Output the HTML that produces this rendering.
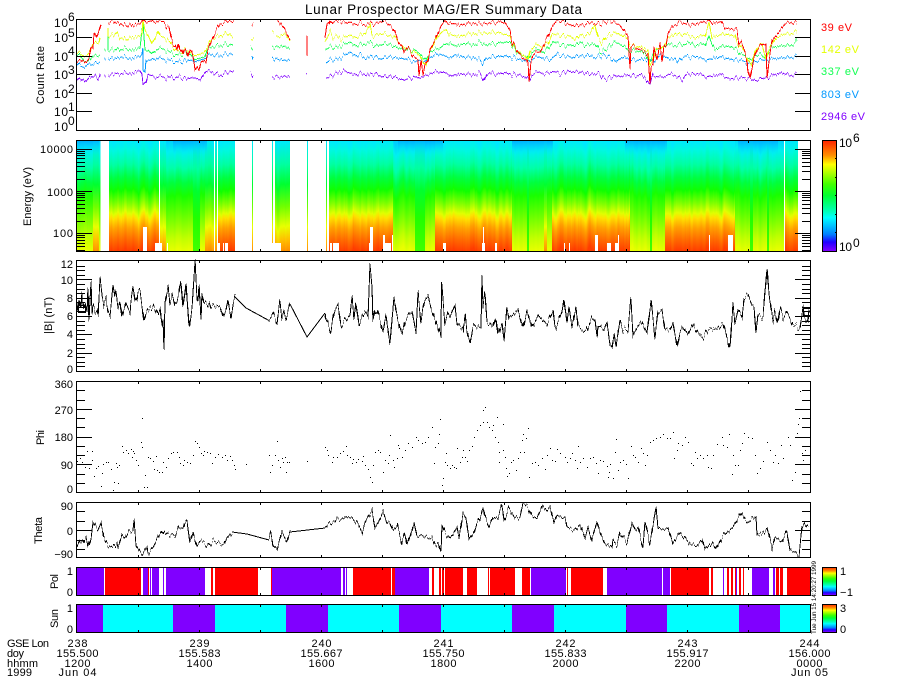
<!DOCTYPE html>
<html lang="en"><head><meta charset="utf-8"><title>Lunar Prospector MAG/ER Summary Data</title>
<style>
html,body{margin:0;padding:0;background:#fff;width:900px;height:700px;overflow:hidden}
svg{display:block}
text{font-family:"Liberation Sans",sans-serif;font-size:11px;fill:#000}
.c{shape-rendering:crispEdges;fill:none}
.k{stroke:#000;stroke-width:1}
.e{font-size:12px}
</style></head><body>
<svg width="900" height="700" viewBox="0 0 900 700" xmlns="http://www.w3.org/2000/svg">
<defs>
<linearGradient id="r" gradientUnits="userSpaceOnUse" x1="0" x2="0" y1="140" y2="251"><stop offset="0" stop-color="#00e8ff"/><stop offset=".09" stop-color="#00f8e0"/><stop offset=".22" stop-color="#00ffa0"/><stop offset=".34" stop-color="#00ff40"/><stop offset=".45" stop-color="#10ff00"/><stop offset=".57" stop-color="#80ff00"/><stop offset=".66" stop-color="#e0ff00"/><stop offset=".7" stop-color="#ffe000"/><stop offset=".79" stop-color="#ffa000"/><stop offset=".9" stop-color="#ff6800"/><stop offset="1" stop-color="#ff3c00"/></linearGradient>
<linearGradient id="w" gradientUnits="userSpaceOnUse" x1="0" x2="0" y1="140" y2="251"><stop offset="0" stop-color="#00d0ff"/><stop offset=".1" stop-color="#00f0f0"/><stop offset=".25" stop-color="#00ffa8"/><stop offset=".38" stop-color="#00ff40"/><stop offset=".5" stop-color="#18ff00"/><stop offset=".7" stop-color="#70ff00"/><stop offset=".88" stop-color="#c0ff00"/><stop offset="1" stop-color="#e8ff00"/></linearGradient>
<linearGradient id="g" gradientUnits="userSpaceOnUse" x1="0" x2="0" y1="140" y2="251"><stop offset="0" stop-color="#00e0ff"/><stop offset=".25" stop-color="#00ffa0"/><stop offset=".45" stop-color="#00ff30"/><stop offset=".7" stop-color="#20ff00"/><stop offset="1" stop-color="#40ff00"/></linearGradient>
<linearGradient id="o" gradientUnits="userSpaceOnUse" x1="0" x2="0" y1="140" y2="251"><stop offset="0" stop-color="#00e8ff"/><stop offset=".22" stop-color="#00ffa0"/><stop offset=".4" stop-color="#00ff30"/><stop offset=".6" stop-color="#70ff00"/><stop offset=".78" stop-color="#e8ff00"/><stop offset=".9" stop-color="#ffc000"/><stop offset="1" stop-color="#ff9000"/></linearGradient>
<linearGradient id="b" gradientUnits="userSpaceOnUse" x1="0" x2="0" y1="140" y2="155"><stop offset="0" stop-color="#00a0ff" stop-opacity=".75"/><stop offset=".5" stop-color="#00c8ff" stop-opacity=".45"/><stop offset="1" stop-color="#00e0ff" stop-opacity="0"/></linearGradient>
<linearGradient id="cb" x1="0" x2="0" y1="0" y2="1"><stop offset="0" stop-color="#ff2000"/><stop offset=".14" stop-color="#ff9000"/><stop offset=".22" stop-color="#ffff00"/><stop offset=".4" stop-color="#40ff00"/><stop offset=".5" stop-color="#00ff30"/><stop offset=".65" stop-color="#00ffc0"/><stop offset=".7" stop-color="#00ffff"/><stop offset=".85" stop-color="#0080ff"/><stop offset=".92" stop-color="#2000ff"/><stop offset="1" stop-color="#8000ff"/></linearGradient>
<filter id="streak" filterUnits="userSpaceOnUse" x="70" y="110" width="750" height="170" color-interpolation-filters="sRGB">
<feTurbulence type="fractalNoise" baseFrequency="0.17 0.0001" numOctaves="3" seed="4"/>
<feColorMatrix values="0 0 0 0 .5  1.6 0 0 0 -.3  0 0 0 0 0  0 0 0 0 1" result="n"/>
<feDisplacementMap in="SourceGraphic" in2="n" scale="11" xChannelSelector="R" yChannelSelector="G"/>
</filter>
<filter id="j1" filterUnits="userSpaceOnUse" x="70" y="10" width="750" height="125" color-interpolation-filters="sRGB">
<feTurbulence type="fractalNoise" baseFrequency="0.37 0.0001" numOctaves="2" seed="7"/>
<feColorMatrix values="0 0 0 0 .5  1.8 0 0 0 -.4  0 0 0 0 0  0 0 0 0 1" result="n"/>
<feDisplacementMap in="SourceGraphic" in2="n" scale="6" xChannelSelector="R" yChannelSelector="G"/>
</filter>
<filter id="j2" filterUnits="userSpaceOnUse" x="70" y="255" width="750" height="120" color-interpolation-filters="sRGB">
<feTurbulence type="fractalNoise" baseFrequency="0.41 0.0001" numOctaves="2" seed="11"/>
<feColorMatrix values="0 0 0 0 .5  1.8 0 0 0 -.4  0 0 0 0 0  0 0 0 0 1" result="n"/>
<feDisplacementMap in="SourceGraphic" in2="n" scale="8" xChannelSelector="R" yChannelSelector="G"/>
</filter>
<filter id="j3" filterUnits="userSpaceOnUse" x="70" y="495" width="750" height="70" color-interpolation-filters="sRGB">
<feTurbulence type="fractalNoise" baseFrequency="0.39 0.0001" numOctaves="2" seed="19"/>
<feColorMatrix values="0 0 0 0 .5  1.8 0 0 0 -.4  0 0 0 0 0  0 0 0 0 1" result="n"/>
<feDisplacementMap in="SourceGraphic" in2="n" scale="7" xChannelSelector="R" yChannelSelector="G"/>
</filter>
<clipPath id="sp"><rect x="77" y="140" width="734" height="111"/></clipPath>
<clipPath id="p1"><rect x="77" y="19" width="734" height="112"/></clipPath>
<clipPath id="p5"><rect x="77" y="502" width="734" height="56"/></clipPath>
</defs>
<rect width="900" height="700" fill="#fff"/>
<text x="305" y="14" style="font-size:13.5px" textLength="277">Lunar Prospector MAG/ER Summary Data</text>

<!-- Panel 1 curves -->
<g class="c" clip-path="url(#p1)"><g filter="url(#j1)">
<g stroke="#8000ff">
<polyline points="77,78 80,81 83,79 86,81 89,78 92,77 95,76 98,79 100,75 100,73"/><polyline points="105,75 105,77"/>
<polyline points="108,75 112,75 116,73 120,74 124,73 128,73 132,74 136,72 140,71 142,75 143,84 146,82 148,74 152,76 156,78 160,76 165,78 170,77 175,78 180,77 185,79 190,78 195,78 200,80 203,75 206,71 210,72 215,73 220,76 225,73 228,72 234,71"/>
<polyline points="251,72 253,76"/><polyline points="272,77 280,77 290,76"/><polyline points="306,75 307,75"/>
<polyline points="326,78 330,77 335,74 340,72 345,71 350,73 355,75 360,74 365,74 370,75 375,73 380,76 385,77 390,76 395,77 400,79 405,80 410,78 415,77 420,78 425,76 430,74 435,72 440,72 445,73 449,75 450,76 455,75 460,74 465,74 470,74 475,75 480,73 484,81 487,74 490,73 495,74 500,74 505,73 510,74 515,75 520,75 525,77 529,80 532,75 536,73 540,72 545,74 550,72 555,72 560,74 565,72 568,71 572,72 578,72 585,73 590,74 600,74 603,78 607,79 612,77 617,76 622,76 628,75 635,76 641,75 645,78 650,84 653,75 658,77 663,77 668,75 672,74 678,77 682,80 686,75 690,74 695,74 700,74 705,77 710,76 715,76 720,74 725,77 730,79 737,78 745,78 750,78 755,81 760,79 765,78 770,77 775,74 780,73 785,74 790,75 797,75"/>
</g>
<g stroke="#0098ff">
<polyline points="77,63 80,66 84,67 88,64 92,65 96,63 100,62"/><polyline points="105,58 105,60"/>
<polyline points="108,58 112,59 116,58 120,57 124,57 128,58 132,59 136,57 140,57 142,55 143,48 143,70 145,72 146,60 150,60 155,59 160,58 165,60 170,60 175,62 180,62 185,61 190,60 195,62 200,60 205,58 210,55 215,55 220,56 225,54 230,54 233,54"/>
<polyline points="252,54 253,58"/><polyline points="272,57 276,60 280,59 285,61 290,59"/>
<polyline points="326,63 330,60 335,60 340,58 345,55 350,52 355,56 360,55 365,58 370,57 375,56 380,59 385,58 390,56 395,58 400,58 405,59 410,60 415,62 420,60 425,62 430,58 435,55 440,54 444,56 449,58 450,58 455,55 460,56 465,57 470,57 475,58 480,60 483,64 486,58 490,58 495,56 500,57 505,56 510,57 515,58 520,60 525,60 528,62 530,60 535,58 540,57 545,58 550,60 555,56 558,54 562,56 568,56 572,58 578,56 585,56 590,55 595,58 600,56 605,55 610,58 615,62 618,60 622,57 627,58 632,60 640,60 645,59 650,60 653,62 657,58 660,56 665,56 670,60 675,58 678,62 682,58 686,56 690,58 695,56 700,58 705,60 710,59 715,58 720,57 725,58 730,59 735,60 740,60 745,62 750,64 755,62 760,60 765,60 770,60 775,58 780,58 785,58 790,57 797,57"/>
</g>
<g stroke="#10ff50">
<polyline points="77,54 82,58 86,62 90,60 93,56 96,56 100,55"/><polyline points="105,49 105,51"/>
<polyline points="108,28 108,50 111,50 115,50 118,48 121,50 125,48 130,50 135,50 140,48 143,23 145,50 148,50 152,54 155,51 160,48 165,50 170,52 175,55 180,55 185,53 190,54 195,60 200,58 205,56 207,50 210,48 215,46 220,46 225,44 230,45 233,44"/>
<polyline points="251,46 253,48"/><polyline points="272,46 276,48 280,46 285,47 290,48"/>
<polyline points="325,50 330,47 335,48 340,46 345,44 350,42 355,46 360,45 365,44 370,42 375,46 380,45 385,44 390,44 395,47 400,48 405,50 410,50 415,50 420,54 423,58 426,60 430,52 435,50 440,48 444,45 449,44 450,43 455,46 460,45 465,43 470,44 475,45 480,42 485,45 490,44 495,44 500,43 510,42 513,46 516,52 520,54 525,56 528,59 532,52 536,50 540,50 543,52 546,50 550,46 553,42 556,43 560,44 565,46 570,45 575,46 580,42 585,46 590,44 595,44 598,48 600,52 605,50 610,46 615,42 620,44 625,47 630,52 635,50 640,52 645,53 650,62 653,56 656,50 660,48 665,46 670,44 675,46 680,44 685,45 690,42 695,46 700,44 705,45 709,36 712,44 715,50 720,47 725,46 732,47 737,50 740,54 745,56 750,60 755,56 760,54 765,58 768,52 772,48 776,46 780,46 785,46 790,45 795,44 797,40"/>
</g>
<g stroke="#e4ff00">
<polyline points="77,52 82,55 86,56 90,52 93,44 96,43 99,42 100,37"/>
<polyline points="108,28 108,36 111,36 114,35 117,32 120,38 123,38 126,40 130,37 134,38 138,37 142,35 143,20 145,30 148,35 152,44 155,38 158,31 160,36 165,38 170,42 172,46 176,50 180,52 185,50 190,52 195,56 200,54 204,52 207,48 210,42 213,38 217,37 222,35 228,33 233,37"/>
<polyline points="251,38 254,38"/><polyline points="272,31 274,31"/><polyline points="276,38 280,36 285,34 290,40"/>
<polyline points="325,42 330,32 333,38 337,36 341,39 345,37 350,35 355,38 360,36 365,33 370,25 372,36 376,35 380,34 385,34 390,36 394,36 397,40 400,44 405,48 410,50 415,52 420,56 423,62 426,66 430,50 434,44 438,36 442,32 446,30 449,35 450,34 455,36 460,36 465,35 470,33 475,34 480,33 485,33 490,33 495,32 510,36 513,45 516,50 520,53 525,56 528,61 530,50 535,46 538,45 542,47 545,44 548,44 552,34 556,35 560,35 565,36 570,36 575,40 580,35 585,36 590,33 595,25 598,38 602,43 606,37 612,34 616,33 622,35 628,39 630,46 636,46 642,48 648,50 650,66 653,60 656,48 660,50 665,44 668,38 672,36 676,33 680,35 685,34 690,36 695,38 700,36 705,36 709,22 712,38 716,36 720,35 725,34 735,36 737,44 740,46 745,52 748,60 751,65 754,55 757,48 762,44 766,60 769,48 772,44 776,38 780,36 785,34 790,34 794,32 797,33"/>
</g>
<g stroke="#ff0000">
<polyline points="77,61 80,62 83,60 86,62 89,59 91,47 93,48 94,33 96,38 98,33 100,27 101,23"/>
<polyline points="108,23 110,22 113,21 116,23 118,22 121,24 124,25 127,26 130,24 133,26 136,25 140,24 142,22 143,19 146,22 150,21 155,22 160,21 164,22 167,27 169,27 171,37 173,44 175,45 177,50 178,44 180,52 182,48 184,54 186,50 188,56 190,50 192,52 194,62 195,70 197,67 199,70 201,62 204,60 206,62 208,50 210,45 212,40 214,35 216,31 218,27 220,24 224,23 228,20 232,22 234,21"/>
<polyline points="252,24 253,22"/><polyline points="276,19 278,21 281,24 284,28 288,36 290,39"/><polyline points="307,37 307,57"/>
<polyline points="325,38 327,24 329,22 330,25 333,21 336,22 340,20 345,23 350,22 355,25 360,23 365,25 370,23 375,24 380,22 385,21 392,27 395,32 397,38 399,43 402,46 404,52 407,48 410,50 413,56 418,60 419,76 421,60 423,75 425,65 428,60 430,50 433,44 436,38 438,33 441,26 445,21 448,24 450,23 460,25 470,23 480,24 490,23 500,22 505,23 510,30 512,42 515,47 518,52 522,57 526,60 528,64 529,82 531,60 533,55 536,53 540,52 543,46 546,40 548,36 552,27 556,22 560,20 565,23 570,25 575,26 580,25 585,25 590,22 595,24 600,24 605,22 610,21 620,25 625,32 628,36 630,68 631,46 635,47 640,50 645,52 648,54 650,84 651,68 653,66 654,46 657,60 660,44 662,62 664,45 666,46 668,34 670,30 673,26 677,24 680,21 685,24 690,25 695,24 700,23 705,22 709,20 713,24 717,22 721,22 725,28 737,30 739,44 741,42 745,52 747,60 748,72 750,78 752,68 754,58 757,50 760,46 763,44 766,45 767,78 769,60 772,42 774,38 778,33 782,28 785,24 790,22 795,23 797,24"/>
</g>
</g></g>

<!-- Panel 2 spectrogram -->
<g clip-path="url(#sp)"><g filter="url(#streak)">
<g fill="url(#w)"><rect x="77" y="110" width="16" height="170"/><rect x="99" y="110" width="1.5" height="170"/><rect x="166" y="110" width="27" height="170"/><rect x="200" y="110" width="5" height="170"/><rect x="393" y="110" width="22" height="170"/><rect x="425" y="110" width="10" height="170"/><rect x="512" y="110" width="15" height="170"/><rect x="529" y="110" width="23" height="170"/><rect x="630" y="110" width="20" height="170"/><rect x="652" y="110" width="13" height="170"/><rect x="735" y="110" width="15" height="170"/><rect x="753" y="110" width="14" height="170"/><rect x="769" y="110" width="15" height="170"/></g>
<g fill="url(#g)"><rect x="193" y="110" width="7" height="170"/><rect x="415" y="110" width="10" height="170"/><rect x="527" y="110" width="2" height="170"/><rect x="650" y="110" width="2" height="170"/><rect x="750" y="110" width="3" height="170"/><rect x="767" y="110" width="2" height="170"/></g>
<g fill="url(#o)"><rect x="93" y="110" width="6" height="170"/><rect x="160" y="110" width="6" height="170"/><rect x="205" y="110" width="9" height="170"/><rect x="215" y="110" width="2" height="170"/><rect x="252" y="110" width="1" height="170"/><rect x="272" y="110" width="1" height="170"/><rect x="275" y="110" width="15" height="170"/><rect x="307" y="110" width="1" height="170"/><rect x="326" y="110" width="1" height="170"/><rect x="544" y="110" width="3" height="170"/></g>
<g fill="url(#r)"><rect x="109" y="110" width="51" height="170"/><rect x="218" y="110" width="17" height="170"/><rect x="329" y="110" width="64" height="170"/><rect x="435" y="110" width="77" height="170"/><rect x="552" y="110" width="78" height="170"/><rect x="665" y="110" width="70" height="170"/><rect x="785" y="110" width="13" height="170"/></g>
</g>
<g fill="url(#b)"><rect x="77" y="140" width="22" height="15"/><rect x="173" y="140" width="34" height="15"/><rect x="398" y="140" width="45" height="15"/><rect x="512" y="140" width="41" height="15"/><rect x="625" y="140" width="42" height="15"/><rect x="738" y="140" width="40" height="15"/></g>
<g class="c" style="fill:#fff"><rect x="159" y="140" width="1" height="111"/><rect x="784" y="140" width="1" height="111"/><rect x="143" y="227" width="4" height="24"/><rect x="155" y="243" width="2" height="8"/><rect x="157" y="243" width="5" height="8"/><rect x="167" y="243" width="1" height="8"/><rect x="218" y="243" width="2" height="8"/><rect x="223" y="243" width="1" height="8"/><rect x="225" y="243" width="3" height="8"/><rect x="272" y="243" width="3" height="8"/><rect x="275" y="243" width="6" height="8"/><rect x="330" y="243" width="2" height="8"/><rect x="333" y="243" width="6" height="8"/><rect x="370" y="227" width="3" height="24"/><rect x="369" y="243" width="4" height="8"/><rect x="383" y="235" width="2" height="16"/><rect x="385" y="243" width="6" height="8"/><rect x="392" y="235" width="1" height="16"/><rect x="443" y="243" width="3" height="8"/><rect x="482" y="243" width="3" height="8"/><rect x="483" y="227" width="1" height="24"/><rect x="495" y="243" width="2" height="8"/><rect x="564" y="243" width="1" height="8"/><rect x="569" y="243" width="1" height="8"/><rect x="595" y="235" width="3" height="16"/><rect x="607" y="243" width="4" height="8"/><rect x="615" y="243" width="4" height="8"/><rect x="618" y="235" width="1" height="8"/><rect x="709" y="235" width="1" height="16"/><rect x="728" y="235" width="5" height="16"/></g>
</g>

<!-- Panel 3 |B| -->
<g class="c k">
<g filter="url(#j2)">
<polyline points="77,303 78,312 79,298 81,310 82,294 84,308 85,304 87,312 88,286 89,320 91,282 92,315 93,305 95,312 97,310 98,316 100,278 102,295 104,305 106,300 108,312 110,315 113,285 115,298 116,292 118,308 120,300 122,318 124,310 126,303 128,308 130,312 131,300 133,287 135,302 137,298 138,290 140,292 142,305 144,322 146,314 148,310 153,305 157,315 160,308 162,327 163,320 164,350 165,302 168,285 170,305 172,298 173,295 175,304 177,302 179,294 181,280 183,308 185,292 186,282 189,328 192,308 195,262 197,300 198,298 199,283 201,320 202,293 204,303 207,305 209,302 211,308 215,305 220,307 223,317 226,310 228,300 231,318 233,305 235,297"/>
<polyline points="268,320 271,317 273,313 275,318 277,323 280,300 282,318 284,312 286,320 290,304"/>
<polyline points="325,313 326,320 328,323 331,332 333,318 335,310 338,305 341,326 344,322 347,318 350,315 352,297 354,320 356,302 359,325 362,318 365,312 368,317 370,264 372,285 373,322 375,312 377,310 380,320 383,332 386,315 388,330 390,345 392,320 394,297 396,310 398,320 400,328 402,335 405,322 407,318 410,313 412,312 414,322 416,333 418,292 421,322 423,308 425,300 428,296 431,308 433,313 437,325 441,338 441.5,282 445,323 448,313 450,317 455,305 457,323 460,327 463,330 465,313 467,332 470,343 473,328 476,325 481,329 482,276 483,307 485,292 487,322 490,323 493,328 496,317 498,335 502,323 504,342 507,307 509,318 513,315 518,310 523,328 527,310 532,328 539,315 547,325 553,310 555,329 562,312 564,298 567,323 569,307 572,327 576,307 578,327 586,332 592,318 595,320 597,337 598,325 604,330 607,322 610,345 612,347 614,333 616,347 620,320 623,330 628,330 631,299 633,335 637,328 642,322 647,333 651,300 655,338 658,312 662,310 665,330 670,330 673,323 677,347 680,332 683,327 688,335 693,324 698,333 703,338 708,330 712,328 717,330 723,323 725,330 730,350 733,303 735,323 738,310 742,318 744,298 748,295 752,305 754,305 756,333 758,315 763,318 767,267 769,295 773,322 775,310 778,323 780,308 783,318 787,312 790,318 793,325 797,327 800,328 803,308 805,318 808,323 809,310"/>
</g>
<polyline points="235,297 246,308 268,320"/><polyline points="290,304 307,337 325,313"/>
<rect x="78.5" y="305.5" width="7" height="7"/><rect x="803.5" y="308.5" width="7" height="7"/>
</g>

<!-- Panel 4 Phi dots -->
<path class="k" shape-rendering="crispEdges" fill="none" transform="translate(0,.5)" d="M77 461h1M80 458h1M82 462h1M85 467h1M87 451h1M89 468h1M92 451h1M92 460h1M94 476h1M96 468h1M98 466h1M101 486h1M102 473h1M103 464h1M106 462h1M108 462h1M111 469h1M113 490h1M114 482h1M116 463h1M117 467h1M118 483h1M119 465h1M122 446h1M123 452h1M126 450h1M128 453h1M131 449h1M133 451h1M132 457h1M134 453h1M136 460h1M138 465h1M141 442h1M142 447h1M142 418h1M144 487h1M145 475h1M147 487h1M148 457h1M150 458h1M153 461h1M154 469h1M156 456h1M157 470h1M159 472h1M162 472h1M163 462h1M166 467h1M168 458h1M171 453h1M173 452h1M177 452h1M179 457h1M180 463h1M183 465h1M184 460h1M187 462h1M190 463h1M193 455h1M195 441h1M197 443h1M199 447h1M201 453h1M203 455h1M204 451h1M207 452h1M210 453h1M212 463h1M215 457h1M218 454h1M222 457h1M225 455h1M227 460h1M230 456h1M232 460h1M234 465h1M235 469h1M246 464h1M269 455h1M270 472h1M272 465h1M275 455h1M277 441h1M278 460h1M280 467h1M282 458h1M283 462h1M285 457h1M286 472h1M287 462h1M289 462h1M307 461h1M325 447h1M327 450h1M328 455h1M332 462h1M333 457h1M337 457h1M340 453h1M343 451h1M346 446h1M347 455h1M350 457h1M352 463h1M353 459h1M356 462h1M358 459h1M362 461h1M363 456h1M365 465h1M368 469h1M370 477h1M372 482h1M373 465h1M375 452h1M378 450h1M380 452h1M383 472h1M385 460h1M388 463h1M390 435h1M389 455h1M393 460h1M394 467h1M397 458h1M398 445h1M399 448h1M402 457h1M405 450h1M408 443h1M412 447h1M416 437h1M418 440h1M422 443h1M425 442h1M428 437h1M432 427h1M434 463h1M435 447h1M438 443h1M439 434h1M440 419h1M442 485h1M443 478h1M445 462h1M446 453h1M447 465h1M450 468h1M452 465h1M454 467h1M456 468h1M457 448h1M460 462h1M462 457h1M463 450h1M465 457h1M467 461h1M469 450h1M472 446h1M474 437h1M477 430h1M480 425h1M483 410h1M485 407h1M483 422h1M487 422h1M489 427h1M492 430h1M493 425h1M495 437h1M497 417h1M498 442h1M499 452h1M499 462h1M503 450h1M503 424h1M505 457h1M506 468h1M507 476h1M509 473h1M511 462h1M513 460h1M516 470h1M518 458h1M520 452h1M522 440h1M523 434h1M524 452h1M526 438h1M528 428h1M529 477h1M532 463h1M535 462h1M538 465h1M542 458h1M545 469h1M547 455h1M550 448h1M552 460h1M555 461h1M557 449h1M560 453h1M565 457h1M567 462h1M570 458h1M572 453h1M575 460h1M577 468h1M578 446h1M580 462h1M583 458h1M587 467h1M590 458h1M593 457h1M596 463h1M598 473h1M600 460h1M603 461h1M607 466h1M608 477h1M609 472h1M613 478h1M610 464h1M615 452h1M616 439h1M618 470h1M620 462h1M623 460h1M626 464h1M628 478h1M631 446h1M633 455h1M635 457h1M638 462h1M641 448h1M643 453h1M645 465h1M647 455h1M650 442h1M653 440h1M656 438h1M660 437h1M663 434h1M667 438h1M670 438h1M673 432h1M674 458h1M677 450h1M678 443h1M682 445h1M685 437h1M688 442h1M691 463h1M693 465h1M695 452h1M697 458h1M700 455h1M703 458h1M707 455h1M708 467h1M711 468h1M713 455h1M717 444h1M722 437h1M723 445h1M727 447h1M729 434h1M732 474h1M733 455h1M735 465h1M738 465h1M740 450h1M742 443h1M744 433h1M748 437h1M752 438h1M755 455h1M757 473h1M760 468h1M763 461h1M767 442h1M770 450h1M773 462h1M775 455h1M778 463h1M781 445h1M783 458h1M788 437h1M790 445h1M792 480h1M795 472h1M797 433h1M798 424h1M799 418h1M800 391h1M802 453h1M803 460h1M805 450h1M808 455h1"/>

<!-- Panel 5 Theta -->
<g class="c k" clip-path="url(#p5)">
<g filter="url(#j3)">
<polyline points="77,547 80,540 83,543 86,538 88,547 91,538 93,522 96,528 98,530 101,523 104,538 108,545 113,548 117,543 118,548 122,535 125,538 129,532 133,530 134,520 136,545 140,552 143,555 147,547 148,553 153,547 158,538 162,530 165,535 168,533 175,536 179,527 183,529 185,522 187,520 190,543 193,533 197,545 200,541 205,543 208,546 213,541 220,543 224,545 227,538 232,532"/>
<polyline points="269,540 271,532 273,545 277,549 282,532 287,542 290,532"/>
<polyline points="325,528 328,525 332,522 335,522 337,518 342,520 347,516 352,518 357,523 362,532 365,523 368,517 372,510 375,528 378,523 383,512 387,523 390,522 393,530 397,525 402,543 405,533 407,545 411,533 414,522 417,537 422,535 427,538 432,538 435,545 438,542 441,552 442,525 445,533 450,538 453,535 457,527 459,538 463,513 466,518 469,540 474,532 477,523 480,518 483,507 485,517 489,527 493,517 498,518 502,505 504,520 509,508 515,518 520,517 523,503 528,507 532,517 537,518 543,505 547,510 550,507 554,523 557,515 565,518 567,527 575,530 580,525 585,538 588,528 592,540 597,523 600,532 605,543 612,548 613,540 617,545 620,533 627,543 632,523 635,530 638,527 643,547 645,522 650,543 656,507 658,528 663,530 668,528 673,543 680,533 685,538 690,545 697,545 702,540 705,550 712,542 716,550 722,537 727,532 733,527 741,513 745,520 748,522 756,517 757,535 763,533 767,528 772,548 775,537 782,542 787,531 790,550 795,552 799,557 802,528 805,522 808,527"/>
</g>
<polyline points="232,532 247,534 269,540"/><polyline points="290,532 325,528"/>
</g>

<!-- Pol / Sun bands -->
<path class="c" stroke="#8000ff" stroke-width="28" d="M77 581H104M143 581H148M150 581H151M152 581H159M163 581H164M166 581H205M272 581H341M343 581H345M346 581H347M395 581H429M531 581H566M607 581H662M663 581H670M723 581H724M736 581H737M752 581H769M773 581H775"/>
<path class="c" stroke="#ff0000" stroke-width="28" d="M105 581H141M148 581H149M211 581H213M215 581H258M271 581H272M353 581H391M392 581H395M432 581H434M439 581H441M442 581H444M445 581H463M467 581H477M488 581H489M490 581H515M522 581H530M567 581H568M571 581H603M671 581H709M711 581H713M727 581H729M731 581H733M735 581H736M739 581H741M743 581H744M776 581H779M780 581H783M787 581H810"/>
<path class="c" stroke="#8000ff" stroke-width="28" d="M77 618H103M173 618H215M286 618H328M399 618H441M512 618H554M626 618H667M739 618H780"/>
<path class="c" stroke="#00ffff" stroke-width="28" d="M103 618H173M215 618H286M328 618H399M441 618H512M554 618H626M667 618H739M780 618H810"/>

<!-- Frames -->
<g class="c k">
<rect x="76.5" y="19.5" width="734" height="111"/><rect x="76.5" y="140.5" width="734" height="111"/><rect x="76.5" y="260.5" width="734" height="111"/><rect x="76.5" y="381.5" width="734" height="111"/><rect x="76.5" y="502.5" width="734" height="55"/><rect x="76.5" y="567.5" width="734" height="28"/><rect x="76.5" y="604.5" width="734" height="28"/>
<path d="M77 37.5h15M77 56.5h15M77 74.5h15M77 93.5h15M77 111.5h15M795 37.5h15M795 56.5h15M795 74.5h15M795 93.5h15M795 111.5h15"/>
<path d="M77 149.5h15M77 191.5h15M77 233.5h15M795 149.5h15M795 191.5h15M795 233.5h15"/>
<path d="M77 151.5h8M77 153.5h8M77 155.5h8M77 158.5h8M77 162.5h8M77 166.5h8M77 171.5h8M77 179.5h8M77 193.5h8M77 195.5h8M77 197.5h8M77 200.5h8M77 204.5h8M77 208.5h8M77 213.5h8M77 221.5h8M77 235.5h8M77 237.5h8M77 240.5h8M77 243.5h8M77 246.5h8M77 250.5h8M802 151.5h8M802 153.5h8M802 155.5h8M802 158.5h8M802 162.5h8M802 166.5h8M802 171.5h8M802 179.5h8M802 193.5h8M802 195.5h8M802 197.5h8M802 200.5h8M802 204.5h8M802 208.5h8M802 213.5h8M802 221.5h8M802 235.5h8M802 237.5h8M802 240.5h8M802 243.5h8M802 246.5h8M802 250.5h8"/>
<path d="M77 279.5h15M77 298.5h15M77 316.5h15M77 334.5h15M77 353.5h15M795 279.5h15M795 298.5h15M795 316.5h15M795 334.5h15M795 353.5h15"/>
<path d="M77 266.5h8M77 270.5h8M77 275.5h8M77 284.5h8M77 289.5h8M77 293.5h8M77 302.5h8M77 307.5h8M77 311.5h8M77 321.5h8M77 325.5h8M77 330.5h8M77 339.5h8M77 344.5h8M77 348.5h8M77 357.5h8M77 362.5h8M77 366.5h8M802 266.5h8M802 270.5h8M802 275.5h8M802 284.5h8M802 289.5h8M802 293.5h8M802 302.5h8M802 307.5h8M802 311.5h8M802 321.5h8M802 325.5h8M802 330.5h8M802 339.5h8M802 344.5h8M802 348.5h8M802 357.5h8M802 362.5h8M802 366.5h8"/>
<path d="M77 409.5h15M77 437.5h15M77 464.5h15M795 409.5h15M795 437.5h15M795 464.5h15M77 390.5h8M77 400.5h8M77 418.5h8M77 427.5h8M77 446.5h8M77 455.5h8M77 474.5h8M77 483.5h8M802 390.5h8M802 400.5h8M802 418.5h8M802 427.5h8M802 446.5h8M802 455.5h8M802 474.5h8M802 483.5h8"/>
<path d="M77 530.5h15M795 530.5h15M77 511.5h8M77 521.5h8M77 540.5h8M77 549.5h8M802 511.5h8M802 521.5h8M802 540.5h8M802 549.5h8"/>
<path d="M138.5 128v2M199.5 128v2M260.5 128v2M321.5 128v2M382.5 128v2M443.5 128v2M504.5 128v2M565.5 128v2M626.5 128v2M687.5 128v2M748.5 128v2M138.5 20v2M199.5 20v2M260.5 20v2M321.5 20v2M382.5 20v2M443.5 20v2M504.5 20v2M565.5 20v2M626.5 20v2M687.5 20v2M748.5 20v2"/>
<path d="M138.5 249v2M199.5 249v2M260.5 249v2M321.5 249v2M382.5 249v2M443.5 249v2M504.5 249v2M565.5 249v2M626.5 249v2M687.5 249v2M748.5 249v2M138.5 141v2M199.5 141v2M260.5 141v2M321.5 141v2M382.5 141v2M443.5 141v2M504.5 141v2M565.5 141v2M626.5 141v2M687.5 141v2M748.5 141v2"/>
<path d="M138.5 369v2M199.5 369v2M260.5 369v2M321.5 369v2M382.5 369v2M443.5 369v2M504.5 369v2M565.5 369v2M626.5 369v2M687.5 369v2M748.5 369v2M138.5 261v2M199.5 261v2M260.5 261v2M321.5 261v2M382.5 261v2M443.5 261v2M504.5 261v2M565.5 261v2M626.5 261v2M687.5 261v2M748.5 261v2"/>
<path d="M138.5 490v2M199.5 490v2M260.5 490v2M321.5 490v2M382.5 490v2M443.5 490v2M504.5 490v2M565.5 490v2M626.5 490v2M687.5 490v2M748.5 490v2M138.5 382v2M199.5 382v2M260.5 382v2M321.5 382v2M382.5 382v2M443.5 382v2M504.5 382v2M565.5 382v2M626.5 382v2M687.5 382v2M748.5 382v2"/>
<path d="M138.5 555v2M199.5 555v2M260.5 555v2M321.5 555v2M382.5 555v2M443.5 555v2M504.5 555v2M565.5 555v2M626.5 555v2M687.5 555v2M748.5 555v2M138.5 503v2M199.5 503v2M260.5 503v2M321.5 503v2M382.5 503v2M443.5 503v2M504.5 503v2M565.5 503v2M626.5 503v2M687.5 503v2M748.5 503v2"/>
<path d="M138.5 593v2M199.5 593v2M260.5 593v2M321.5 593v2M382.5 593v2M443.5 593v2M504.5 593v2M565.5 593v2M626.5 593v2M687.5 593v2M748.5 593v2M138.5 568v2M199.5 568v2M260.5 568v2M321.5 568v2M382.5 568v2M443.5 568v2M504.5 568v2M565.5 568v2M626.5 568v2M687.5 568v2M748.5 568v2"/>
<path d="M138.5 630v2M199.5 630v2M260.5 630v2M321.5 630v2M382.5 630v2M443.5 630v2M504.5 630v2M565.5 630v2M626.5 630v2M687.5 630v2M748.5 630v2M138.5 605v2M199.5 605v2M260.5 605v2M321.5 605v2M382.5 605v2M443.5 605v2M504.5 605v2M565.5 605v2M626.5 605v2M687.5 605v2M748.5 605v2"/>
</g>

<!-- Colour bars -->
<rect x="823" y="140" width="14" height="111" fill="url(#cb)"/>
<rect x="823" y="567" width="14" height="28" fill="url(#cb)"/>
<rect x="823" y="604" width="14" height="28" fill="url(#cb)"/>
<g class="c k"><rect x="822.5" y="140.5" width="14" height="111"/><rect x="822.5" y="567.5" width="14" height="28"/><rect x="822.5" y="604.5" width="14" height="28"/>
<path d="M835 158.5h2M835 177.5h2M835 195.5h2M835 214.5h2M835 232.5h2"/></g>

<!-- Axis number labels -->
<g>
<text class="e" x="54" y="27" textLength="14">10</text><text class="e" x="68" y="21">6</text>
<text class="e" x="54" y="42" textLength="14">10</text><text class="e" x="68" y="37">5</text>
<text class="e" x="54" y="61" textLength="14">10</text><text class="e" x="68" y="55">4</text>
<text class="e" x="54" y="79" textLength="14">10</text><text class="e" x="68" y="74">3</text>
<text class="e" x="54" y="98" textLength="14">10</text><text class="e" x="68" y="93">2</text>
<text class="e" x="54" y="116" textLength="14">10</text><text class="e" x="68" y="111">1</text>
<text class="e" x="54" y="131" textLength="14">10</text><text class="e" x="68" y="125">0</text>
</g>
<g text-anchor="end">
<text x="73" y="153" textLength="33">10000</text>
<text x="73" y="196" textLength="26">1000</text>
<text x="73" y="237" textLength="20">100</text>
<text x="73" y="268">12</text><text x="73" y="284">10</text><text x="73" y="302">8</text><text x="73" y="320">6</text><text x="73" y="338">4</text><text x="73" y="357">2</text><text x="73" y="373">0</text>
<text x="73" y="388">360</text><text x="73" y="414">270</text><text x="73" y="441">180</text><text x="73" y="469">90</text><text x="73" y="493">0</text>
<text x="73" y="510">90</text><text x="73" y="535">0</text><text x="73" y="558">−90</text>
<text x="73" y="575">1</text><text x="73" y="596">0</text>
<text x="73" y="612">1</text><text x="73" y="633">0</text>
</g>

<!-- Y axis titles -->
<text transform="translate(44,75) rotate(-90)" text-anchor="middle" textLength="58">Count Rate</text>
<text transform="translate(31,196.5) rotate(-90)" text-anchor="middle" textLength="59">Energy (eV)</text>
<text transform="translate(52,315.5) rotate(-90)" text-anchor="middle" textLength="37">|B| (nT)</text>
<text transform="translate(44,437.5) rotate(-90)" text-anchor="middle" textLength="15">Phi</text>
<text transform="translate(42,530.5) rotate(-90)" text-anchor="middle" textLength="27">Theta</text>
<text transform="translate(58,581.5) rotate(-90)" text-anchor="middle" textLength="15">Pol</text>
<text transform="translate(58,618.5) rotate(-90)" text-anchor="middle" textLength="19">Sun</text>

<!-- Right-side labels -->
<text x="821" y="31" style="fill:#ff0000" textLength="31">39 eV</text>
<text x="821" y="53" style="fill:#e4ff00" textLength="38">142 eV</text>
<text x="821" y="75" style="fill:#10ff50" textLength="38">337 eV</text>
<text x="821" y="98" style="fill:#0098ff" textLength="38">803 eV</text>
<text x="821" y="120" style="fill:#8000ff" textLength="44">2946 eV</text>
<text class="e" x="839" y="147" textLength="13">10</text><text class="e" x="853" y="142">6</text>
<text class="e" x="839" y="251" textLength="13">10</text><text class="e" x="853" y="247">0</text>
<text x="840" y="575">1</text><text x="840" y="596" textLength="13">−1</text>
<text x="840" y="612">3</text><text x="840" y="633">0</text>

<!-- Timestamp -->
<text transform="translate(816,634) rotate(-90)" style="font-size:6.5px" textLength="73" lengthAdjust="spacingAndGlyphs">Tue Jun 15 14:20:27 1999</text>

<!-- Bottom rows -->
<g>
<text x="7" y="647" textLength="42">GSE Lon</text>
<text x="7" y="657" textLength="17">doy</text>
<text x="7" y="667" textLength="31">hhmm</text>
<text x="7" y="676" textLength="25">1999</text>
</g>
<g text-anchor="middle">
<text x="77.5" y="647" textLength="20">238</text><text x="199.5" y="647" textLength="20">239</text><text x="321.5" y="647" textLength="20">240</text><text x="443.5" y="647" textLength="20">241</text><text x="565.5" y="647" textLength="20">242</text><text x="687.5" y="647" textLength="20">243</text><text x="809.5" y="647" textLength="20">244</text>
<text x="77.5" y="657" textLength="42">155.500</text><text x="199.5" y="657" textLength="42">155.583</text><text x="321.5" y="657" textLength="42">155.667</text><text x="443.5" y="657" textLength="42">155.750</text><text x="565.5" y="657" textLength="42">155.833</text><text x="687.5" y="657" textLength="42">155.917</text><text x="809.5" y="657" textLength="42">156.000</text>
<text x="77.5" y="667" textLength="26">1200</text><text x="199.5" y="667" textLength="26">1400</text><text x="321.5" y="667" textLength="26">1600</text><text x="443.5" y="667" textLength="26">1800</text><text x="565.5" y="667" textLength="26">2000</text><text x="687.5" y="667" textLength="26">2200</text><text x="809.5" y="667" textLength="26">0000</text>
<text x="77.5" y="676" textLength="38">Jun 04</text><text x="809.5" y="676" textLength="37">Jun 05</text>
</g>
</svg>
</body></html>
